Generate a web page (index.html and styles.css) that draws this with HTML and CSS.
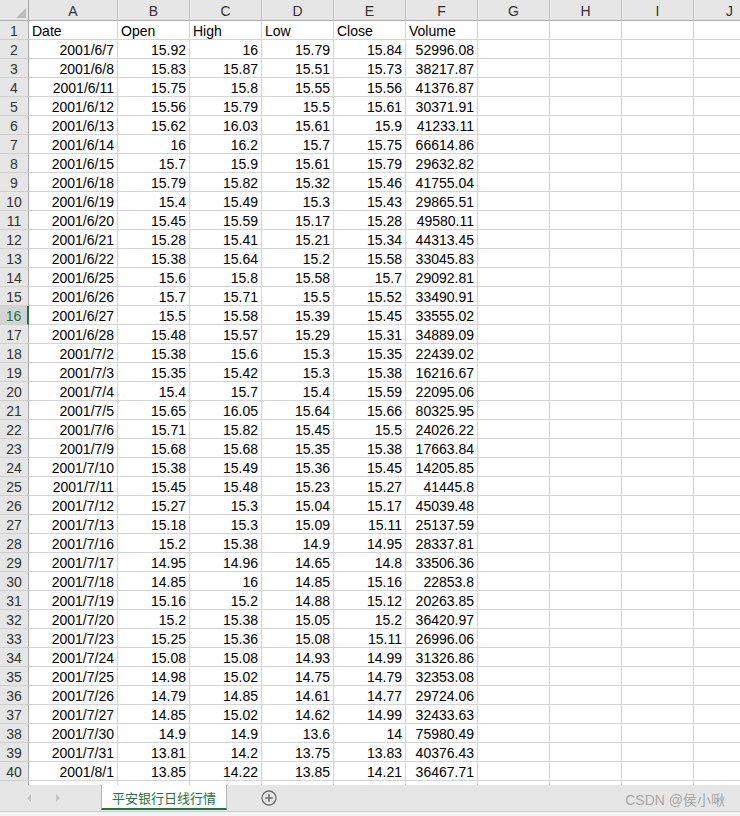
FILE: index.html
```html
<!DOCTYPE html>
<html>
<head>
<meta charset="utf-8">
<link rel="stylesheet" href="styles.css">
</head>
<body>
<div class="sheet">
  <div class="row head">
    <span class="corner"><svg width="10" height="10" viewBox="0 0 10 10"><polygon points="10,0 10,10 0,10" fill="#bdbdbd"/></svg></span>
    <span>A</span><span>B</span><span>C</span><span>D</span><span>E</span><span>F</span><span>G</span><span>H</span><span>I</span><span>J</span>
  </div>
  <div class="row"><span class="rh">1</span><span>Date</span><span>Open</span><span>High</span><span>Low</span><span>Close</span><span>Volume</span><span></span><span></span><span></span><span></span></div>
  <div class="row"><span class="rh">2</span><span class="n">2001/6/7</span><span class="n">15.92</span><span class="n">16</span><span class="n">15.79</span><span class="n">15.84</span><span class="n">52996.08</span><span></span><span></span><span></span><span></span></div>
  <div class="row"><span class="rh">3</span><span class="n">2001/6/8</span><span class="n">15.83</span><span class="n">15.87</span><span class="n">15.51</span><span class="n">15.73</span><span class="n">38217.87</span><span></span><span></span><span></span><span></span></div>
  <div class="row"><span class="rh">4</span><span class="n">2001/6/11</span><span class="n">15.75</span><span class="n">15.8</span><span class="n">15.55</span><span class="n">15.56</span><span class="n">41376.87</span><span></span><span></span><span></span><span></span></div>
  <div class="row"><span class="rh">5</span><span class="n">2001/6/12</span><span class="n">15.56</span><span class="n">15.79</span><span class="n">15.5</span><span class="n">15.61</span><span class="n">30371.91</span><span></span><span></span><span></span><span></span></div>
  <div class="row"><span class="rh">6</span><span class="n">2001/6/13</span><span class="n">15.62</span><span class="n">16.03</span><span class="n">15.61</span><span class="n">15.9</span><span class="n">41233.11</span><span></span><span></span><span></span><span></span></div>
  <div class="row"><span class="rh">7</span><span class="n">2001/6/14</span><span class="n">16</span><span class="n">16.2</span><span class="n">15.7</span><span class="n">15.75</span><span class="n">66614.86</span><span></span><span></span><span></span><span></span></div>
  <div class="row"><span class="rh">8</span><span class="n">2001/6/15</span><span class="n">15.7</span><span class="n">15.9</span><span class="n">15.61</span><span class="n">15.79</span><span class="n">29632.82</span><span></span><span></span><span></span><span></span></div>
  <div class="row"><span class="rh">9</span><span class="n">2001/6/18</span><span class="n">15.79</span><span class="n">15.82</span><span class="n">15.32</span><span class="n">15.46</span><span class="n">41755.04</span><span></span><span></span><span></span><span></span></div>
  <div class="row"><span class="rh">10</span><span class="n">2001/6/19</span><span class="n">15.4</span><span class="n">15.49</span><span class="n">15.3</span><span class="n">15.43</span><span class="n">29865.51</span><span></span><span></span><span></span><span></span></div>
  <div class="row"><span class="rh">11</span><span class="n">2001/6/20</span><span class="n">15.45</span><span class="n">15.59</span><span class="n">15.17</span><span class="n">15.28</span><span class="n">49580.11</span><span></span><span></span><span></span><span></span></div>
  <div class="row"><span class="rh">12</span><span class="n">2001/6/21</span><span class="n">15.28</span><span class="n">15.41</span><span class="n">15.21</span><span class="n">15.34</span><span class="n">44313.45</span><span></span><span></span><span></span><span></span></div>
  <div class="row"><span class="rh">13</span><span class="n">2001/6/22</span><span class="n">15.38</span><span class="n">15.64</span><span class="n">15.2</span><span class="n">15.58</span><span class="n">33045.83</span><span></span><span></span><span></span><span></span></div>
  <div class="row"><span class="rh">14</span><span class="n">2001/6/25</span><span class="n">15.6</span><span class="n">15.8</span><span class="n">15.58</span><span class="n">15.7</span><span class="n">29092.81</span><span></span><span></span><span></span><span></span></div>
  <div class="row"><span class="rh">15</span><span class="n">2001/6/26</span><span class="n">15.7</span><span class="n">15.71</span><span class="n">15.5</span><span class="n">15.52</span><span class="n">33490.91</span><span></span><span></span><span></span><span></span></div>
  <div class="row"><span class="rh sel">16</span><span class="n">2001/6/27</span><span class="n">15.5</span><span class="n">15.58</span><span class="n">15.39</span><span class="n">15.45</span><span class="n">33555.02</span><span></span><span></span><span></span><span></span></div>
  <div class="row"><span class="rh">17</span><span class="n">2001/6/28</span><span class="n">15.48</span><span class="n">15.57</span><span class="n">15.29</span><span class="n">15.31</span><span class="n">34889.09</span><span></span><span></span><span></span><span></span></div>
  <div class="row"><span class="rh">18</span><span class="n">2001/7/2</span><span class="n">15.38</span><span class="n">15.6</span><span class="n">15.3</span><span class="n">15.35</span><span class="n">22439.02</span><span></span><span></span><span></span><span></span></div>
  <div class="row"><span class="rh">19</span><span class="n">2001/7/3</span><span class="n">15.35</span><span class="n">15.42</span><span class="n">15.3</span><span class="n">15.38</span><span class="n">16216.67</span><span></span><span></span><span></span><span></span></div>
  <div class="row"><span class="rh">20</span><span class="n">2001/7/4</span><span class="n">15.4</span><span class="n">15.7</span><span class="n">15.4</span><span class="n">15.59</span><span class="n">22095.06</span><span></span><span></span><span></span><span></span></div>
  <div class="row"><span class="rh">21</span><span class="n">2001/7/5</span><span class="n">15.65</span><span class="n">16.05</span><span class="n">15.64</span><span class="n">15.66</span><span class="n">80325.95</span><span></span><span></span><span></span><span></span></div>
  <div class="row"><span class="rh">22</span><span class="n">2001/7/6</span><span class="n">15.71</span><span class="n">15.82</span><span class="n">15.45</span><span class="n">15.5</span><span class="n">24026.22</span><span></span><span></span><span></span><span></span></div>
  <div class="row"><span class="rh">23</span><span class="n">2001/7/9</span><span class="n">15.68</span><span class="n">15.68</span><span class="n">15.35</span><span class="n">15.38</span><span class="n">17663.84</span><span></span><span></span><span></span><span></span></div>
  <div class="row"><span class="rh">24</span><span class="n">2001/7/10</span><span class="n">15.38</span><span class="n">15.49</span><span class="n">15.36</span><span class="n">15.45</span><span class="n">14205.85</span><span></span><span></span><span></span><span></span></div>
  <div class="row"><span class="rh">25</span><span class="n">2001/7/11</span><span class="n">15.45</span><span class="n">15.48</span><span class="n">15.23</span><span class="n">15.27</span><span class="n">41445.8</span><span></span><span></span><span></span><span></span></div>
  <div class="row"><span class="rh">26</span><span class="n">2001/7/12</span><span class="n">15.27</span><span class="n">15.3</span><span class="n">15.04</span><span class="n">15.17</span><span class="n">45039.48</span><span></span><span></span><span></span><span></span></div>
  <div class="row"><span class="rh">27</span><span class="n">2001/7/13</span><span class="n">15.18</span><span class="n">15.3</span><span class="n">15.09</span><span class="n">15.11</span><span class="n">25137.59</span><span></span><span></span><span></span><span></span></div>
  <div class="row"><span class="rh">28</span><span class="n">2001/7/16</span><span class="n">15.2</span><span class="n">15.38</span><span class="n">14.9</span><span class="n">14.95</span><span class="n">28337.81</span><span></span><span></span><span></span><span></span></div>
  <div class="row"><span class="rh">29</span><span class="n">2001/7/17</span><span class="n">14.95</span><span class="n">14.96</span><span class="n">14.65</span><span class="n">14.8</span><span class="n">33506.36</span><span></span><span></span><span></span><span></span></div>
  <div class="row"><span class="rh">30</span><span class="n">2001/7/18</span><span class="n">14.85</span><span class="n">16</span><span class="n">14.85</span><span class="n">15.16</span><span class="n">22853.8</span><span></span><span></span><span></span><span></span></div>
  <div class="row"><span class="rh">31</span><span class="n">2001/7/19</span><span class="n">15.16</span><span class="n">15.2</span><span class="n">14.88</span><span class="n">15.12</span><span class="n">20263.85</span><span></span><span></span><span></span><span></span></div>
  <div class="row"><span class="rh">32</span><span class="n">2001/7/20</span><span class="n">15.2</span><span class="n">15.38</span><span class="n">15.05</span><span class="n">15.2</span><span class="n">36420.97</span><span></span><span></span><span></span><span></span></div>
  <div class="row"><span class="rh">33</span><span class="n">2001/7/23</span><span class="n">15.25</span><span class="n">15.36</span><span class="n">15.08</span><span class="n">15.11</span><span class="n">26996.06</span><span></span><span></span><span></span><span></span></div>
  <div class="row"><span class="rh">34</span><span class="n">2001/7/24</span><span class="n">15.08</span><span class="n">15.08</span><span class="n">14.93</span><span class="n">14.99</span><span class="n">31326.86</span><span></span><span></span><span></span><span></span></div>
  <div class="row"><span class="rh">35</span><span class="n">2001/7/25</span><span class="n">14.98</span><span class="n">15.02</span><span class="n">14.75</span><span class="n">14.79</span><span class="n">32353.08</span><span></span><span></span><span></span><span></span></div>
  <div class="row"><span class="rh">36</span><span class="n">2001/7/26</span><span class="n">14.79</span><span class="n">14.85</span><span class="n">14.61</span><span class="n">14.77</span><span class="n">29724.06</span><span></span><span></span><span></span><span></span></div>
  <div class="row"><span class="rh">37</span><span class="n">2001/7/27</span><span class="n">14.85</span><span class="n">15.02</span><span class="n">14.62</span><span class="n">14.99</span><span class="n">32433.63</span><span></span><span></span><span></span><span></span></div>
  <div class="row"><span class="rh">38</span><span class="n">2001/7/30</span><span class="n">14.9</span><span class="n">14.9</span><span class="n">13.6</span><span class="n">14</span><span class="n">75980.49</span><span></span><span></span><span></span><span></span></div>
  <div class="row"><span class="rh">39</span><span class="n">2001/7/31</span><span class="n">13.81</span><span class="n">14.2</span><span class="n">13.75</span><span class="n">13.83</span><span class="n">40376.43</span><span></span><span></span><span></span><span></span></div>
  <div class="row"><span class="rh">40</span><span class="n">2001/8/1</span><span class="n">13.85</span><span class="n">14.22</span><span class="n">13.85</span><span class="n">14.21</span><span class="n">36467.71</span><span></span><span></span><span></span><span></span></div>
  <div class="row"><span class="rh"></span><span></span><span></span><span></span><span></span><span></span><span></span><span></span><span></span><span></span><span></span></div>
</div>
<div class="footer">
  <div class="tabbar">
    <div class="nav">
      <span class="arrow left"></span>
      <span class="arrow right"></span>
    </div>
    <div class="tab">平安银行日线行情</div>
    <svg class="add" width="16" height="16" viewBox="0 0 16 16"><circle cx="8" cy="8" r="7" fill="none" stroke="#6e6e6e" stroke-width="1.3"/><path d="M8 4.2v7.6M4.2 8h7.6" stroke="#6e6e6e" stroke-width="1.6"/></svg>
    <div class="mark">CSDN @侯小啾</div>
  </div>
</div>
</body>
</html>
```
FILE: styles.css
```css
html, body {
  margin: 0;
  padding: 0;
}
body {
  width: 740px;
  height: 816px;
  overflow: hidden;
  background: #fff;
  font-family: "Liberation Sans", Arial, "Noto Sans CJK SC", sans-serif;
}
.sheet {
  height: 785px;
  overflow: hidden;
}
.row {
  display: grid;
  grid-template-columns: 29px 89px repeat(9, 72px);
  height: 19px;
}
.row > span {
  box-sizing: border-box;
  border-right: 1px solid #d4d4d4;
  border-bottom: 1px solid #d4d4d4;
  font-size: 14px;
  line-height: 20px;
  padding: 0 3px;
  white-space: nowrap;
  overflow: hidden;
  color: #000;
}
.row > .n {
  text-align: right;
  padding-right: 3px;
}
.row > .rh {
  background: #e6e6e6;
  text-align: center;
  padding: 0;
  color: #333;
  border-right-color: #a6a6a6;
  border-bottom-color: #cfcfcf;
}
.row > .sel {
  background: #d3d3d3;
  color: #217346;
  border-right: 2px solid #217346;
}
.head {
  height: 21px;
  background: #e6e6e6;
}
.head > span {
  text-align: center;
  line-height: 22px;
  color: #333;
  border-right-color: #c4c4c4;
  border-bottom-color: #ababab;
}
.head > .corner {
  display: flex;
  justify-content: flex-end;
  align-items: flex-end;
  padding: 0 2px 2px 0;
  border-right-color: #a6a6a6;
}
.footer {
  height: 31px;
  background: #f3f3f3;
}
.tabbar {
  height: 27px;
  box-sizing: border-box;
  border-bottom: 1px solid #cdcdcd;
  background: #e6e6e6;
  display: flex;
  align-items: flex-start;
}
.nav {
  width: 101px;
  height: 25px;
  display: flex;
  align-items: center;
  padding-left: 27px;
  box-sizing: border-box;
  gap: 25px;
}
.arrow {
  width: 0;
  height: 0;
  border-top: 4px solid transparent;
  border-bottom: 4px solid transparent;
  margin-top: 1px;
}
.arrow.left {
  border-right: 4px solid #c4c4c4;
}
.arrow.right {
  border-left: 4px solid #c4c4c4;
}
.tab {
  width: 126px;
  height: 25px;
  box-sizing: border-box;
  background: #fff;
  border-left: 1px solid #b4b4b4;
  border-right: 1px solid #b4b4b4;
  border-bottom: 2px solid #217346;
  color: #217346;
  font-family: "Noto Sans CJK SC", sans-serif;
  font-size: 13px;
  display: flex;
  align-items: center;
  justify-content: center;
  padding-top: 1px;
}
.add {
  margin: 5px 0 0 34px;
}
.mark {
  margin-left: auto;
  margin-right: 15px;
  margin-top: 5px;
  font-size: 14px;
  line-height: 20px;
  color: #a8a8a8;
  font-family: "Liberation Sans", "Noto Sans CJK SC", sans-serif;
}
```
